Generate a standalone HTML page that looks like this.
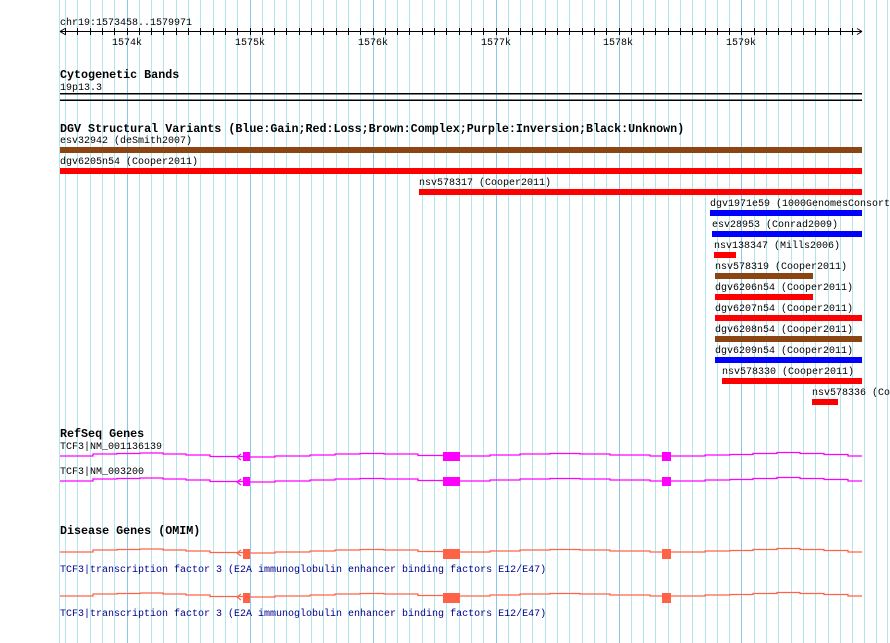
<!DOCTYPE html>
<html><head><meta charset="utf-8"><style>
html,body{margin:0;padding:0;background:#fff;}
svg{display:block;}
text{font-family:"Liberation Mono",monospace;font-size:10px;fill:#000;}
.b{font-weight:bold;font-size:11.7px;}
.o{fill:#00008b;}
</style></head><body>
<svg width="890" height="643" viewBox="0 0 890 643" xmlns="http://www.w3.org/2000/svg">
<defs>
<path id="gl" fill="none" stroke-width="1.3" d="M60,1 H93 V-1 H117 V-1.5 H140 V-2 H163 V-1 H186 V0 H210 V1.5 H243 M250,2 H275 V1 H310 V0 H335 V-1 H360 V-1.5 H384 V-1 H418 V0.5 H443 M460,1 H490 V0 H520 V-1 H550 V-1.5 H580 V-1 H610 V0 H650 V1 H662 M671,1 H705 V0 H730 V-0.5 H753 V-1.5 H777 V-2.5 H800 V-1.5 H824 V-0.5 H848 V1 H862"/>
</defs>
<g id="grid" stroke="#b0e6ec" stroke-width="1">
<line x1="59.5" y1="0" x2="59.5" y2="643"/>
</g>
<g stroke-width="1">
<!-- minor lines -->
<g stroke="#b0e6ec">
<path d="M65.5,0V643M77.5,0V643M90.5,0V643M102.5,0V643M114.5,0V643M139.5,0V643M151.5,0V643M163.5,0V643M176.5,0V643M188.5,0V643M200.5,0V643M213.5,0V643M225.5,0V643M237.5,0V643M262.5,0V643M274.5,0V643M286.5,0V643M299.5,0V643M311.5,0V643M323.5,0V643M336.5,0V643M348.5,0V643M360.5,0V643M385.5,0V643M397.5,0V643M409.5,0V643M422.5,0V643M434.5,0V643M446.5,0V643M459.5,0V643M471.5,0V643M483.5,0V643M508.5,0V643M520.5,0V643M532.5,0V643M545.5,0V643M557.5,0V643M569.5,0V643M582.5,0V643M594.5,0V643M606.5,0V643M631.5,0V643M643.5,0V643M655.5,0V643M668.5,0V643M680.5,0V643M692.5,0V643M705.5,0V643M717.5,0V643M729.5,0V643M754.5,0V643M766.5,0V643M778.5,0V643M791.5,0V643M803.5,0V643M815.5,0V643M828.5,0V643M840.5,0V643M852.5,0V643M864.5,0V643M876.5,0V643M887.5,0V643"/>
</g>
<g stroke="#8cc6ea">
<path d="M127.5,0V643M250.5,0V643M373.5,0V643M496.5,0V643M619.5,0V643M741.5,0V643"/>
</g>
</g>

<!-- ruler -->
<text x="60" y="25">chr19:1573458..1579971</text>
<line x1="60" y1="31.5" x2="862" y2="31.5" stroke="#000"/>
<path d="M60,31.5 l5,-3 M60,31.5 l5,3 M862,31.5 l-5,-3 M862,31.5 l-5,3" stroke="#000" fill="none"/>
<path stroke="#000" d="M65.5,28V35M77.5,28V35M90.5,28V35M102.5,28V35M114.5,28V35M127.5,28V35M139.5,28V35M151.5,28V35M163.5,28V35M176.5,28V35M188.5,28V35M200.5,28V35M213.5,28V35M225.5,28V35M237.5,28V35M250.5,28V35M262.5,28V35M274.5,28V35M286.5,28V35M299.5,28V35M311.5,28V35M323.5,28V35M336.5,28V35M348.5,28V35M360.5,28V35M373.5,28V35M385.5,28V35M397.5,28V35M409.5,28V35M422.5,28V35M434.5,28V35M446.5,28V35M459.5,28V35M471.5,28V35M483.5,28V35M496.5,28V35M508.5,28V35M520.5,28V35M532.5,28V35M545.5,28V35M557.5,28V35M569.5,28V35M582.5,28V35M594.5,28V35M606.5,28V35M619.5,28V35M631.5,28V35M643.5,28V35M655.5,28V35M668.5,28V35M680.5,28V35M692.5,28V35M705.5,28V35M717.5,28V35M729.5,28V35M741.5,28V35M754.5,28V35M766.5,28V35M778.5,28V35M791.5,28V35M803.5,28V35M815.5,28V35M828.5,28V35M840.5,28V35M852.5,28V35"/>
<text x="112" y="45">1574k</text>
<text x="235" y="45">1575k</text>
<text x="358" y="45">1576k</text>
<text x="481" y="45">1577k</text>
<text x="603" y="45">1578k</text>
<text x="726" y="45">1579k</text>

<!-- cyto -->
<text class="b" x="60" y="78">Cytogenetic Bands</text>
<text x="60" y="90">19p13.3</text>
<rect x="60" y="93" width="802" height="1.5" fill="#000"/>
<rect x="60" y="99.5" width="802" height="1.5" fill="#000"/>

<!-- DGV -->
<text class="b" x="60" y="132">DGV Structural Variants (Blue:Gain;Red:Loss;Brown:Complex;Purple:Inversion;Black:Unknown)</text>
<text x="60" y="143">esv32942 (deSmith2007)</text>
<rect x="60" y="147" width="802" height="6" fill="#8b4513"/>
<text x="60" y="164">dgv6205n54 (Cooper2011)</text>
<rect x="60" y="168" width="802" height="6" fill="#f00"/>
<text x="419" y="185">nsv578317 (Cooper2011)</text>
<rect x="419" y="189" width="443" height="6" fill="#f00"/>
<text x="710" y="206">dgv1971e59 (1000GenomesConsortium)</text>
<rect x="710" y="210" width="152" height="6" fill="#00f"/>
<text x="712" y="227">esv28953 (Conrad2009)</text>
<rect x="712" y="231" width="150" height="6" fill="#00f"/>
<text x="714" y="248">nsv138347 (Mills2006)</text>
<rect x="714" y="252" width="22" height="6" fill="#f00"/>
<text x="715" y="269">nsv578319 (Cooper2011)</text>
<rect x="715" y="273" width="98" height="6" fill="#8b4513"/>
<text x="715" y="290">dgv6206n54 (Cooper2011)</text>
<rect x="715" y="294" width="98" height="6" fill="#f00"/>
<text x="715" y="311">dgv6207n54 (Cooper2011)</text>
<rect x="715" y="315" width="147" height="6" fill="#f00"/>
<text x="715" y="332">dgv6208n54 (Cooper2011)</text>
<rect x="715" y="336" width="147" height="6" fill="#8b4513"/>
<text x="715" y="353">dgv6209n54 (Cooper2011)</text>
<rect x="715" y="357" width="147" height="6" fill="#00f"/>
<text x="722" y="374">nsv578330 (Cooper2011)</text>
<rect x="722" y="378" width="140" height="6" fill="#f00"/>
<text x="812" y="395">nsv578336 (Cooper2011)</text>
<rect x="812" y="399" width="26" height="6" fill="#f00"/>

<!-- RefSeq -->
<text class="b" x="60" y="437">RefSeq Genes</text>
<text x="60" y="449">TCF3|NM_001136139</text>
<g transform="translate(0,455)" stroke="#f0f" fill="#f0f">
<use href="#gl"/>
<path d="M243,2 H250 M241,-1 l-4,3 l4,3" fill="none" stroke-width="1.2"/>
<rect x="243" y="-3" width="7" height="9" stroke="none"/>
<rect x="443" y="-3" width="17" height="9" stroke="none"/>
<rect x="662" y="-3" width="9" height="9" stroke="none"/>
</g>
<text x="60" y="474">TCF3|NM_003200</text>
<g transform="translate(0,480)" stroke="#f0f" fill="#f0f">
<use href="#gl"/>
<path d="M243,2 H250 M241,-1 l-4,3 l4,3" fill="none" stroke-width="1.2"/>
<rect x="243" y="-3" width="7" height="9" stroke="none"/>
<rect x="443" y="-3" width="17" height="9" stroke="none"/>
<rect x="662" y="-3" width="9" height="9" stroke="none"/>
</g>

<!-- OMIM -->
<text class="b" x="60" y="534">Disease Genes (OMIM)</text>
<g transform="translate(0,551)" stroke="#ff6347" fill="#ff6347">
<use href="#gl"/>
<path d="M243,2 H250 M241,-1 l-4,3 l4,3" fill="none" stroke-width="1.2"/>
<rect x="243" y="-2" width="7" height="10" stroke="none"/>
<rect x="443" y="-2" width="17" height="10" stroke="none"/>
<rect x="662" y="-2" width="9" height="10" stroke="none"/>
</g>
<text class="o" x="60" y="572">TCF3|transcription factor 3 (E2A immunoglobulin enhancer binding factors E12/E47)</text>
<g transform="translate(0,595)" stroke="#ff6347" fill="#ff6347">
<use href="#gl"/>
<path d="M243,2 H250 M241,-1 l-4,3 l4,3" fill="none" stroke-width="1.2"/>
<rect x="243" y="-2" width="7" height="10" stroke="none"/>
<rect x="443" y="-2" width="17" height="10" stroke="none"/>
<rect x="662" y="-2" width="9" height="10" stroke="none"/>
</g>
<text class="o" x="60" y="616">TCF3|transcription factor 3 (E2A immunoglobulin enhancer binding factors E12/E47)</text>
</svg>
</body></html>
